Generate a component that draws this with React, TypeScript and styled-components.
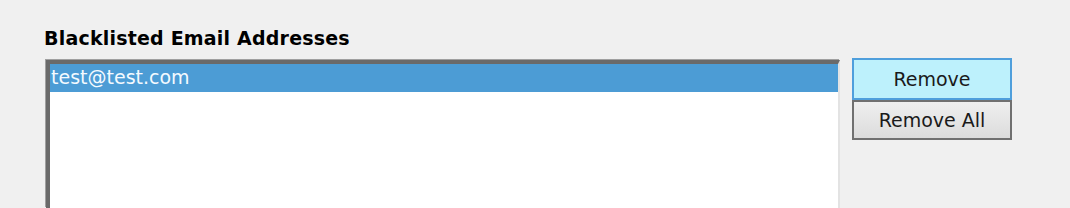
import React, { useState } from 'react';
import styled, { createGlobalStyle } from 'styled-components';

const GlobalStyle = createGlobalStyle`
  html, body {
    margin: 0;
    padding: 0;
    background: #f0f0f0;
    overflow: hidden;
  }
`;

const emails = ['test@test.com'];

export default function App() {
  const [selected, setSelected] = useState(0);

  return (
    <>
      <GlobalStyle />
      <Panel>
        <Title>Blacklisted Email Addresses</Title>
        <Body>
          <ListBox>
            {emails.map((email, i) => (
              <ListItem key={email} $selected={i === selected} onClick={() => setSelected(i)}>
                {email}
              </ListItem>
            ))}
          </ListBox>
          <Buttons>
            <Button $focused>Remove</Button>
            <Button>Remove All</Button>
          </Buttons>
        </Body>
      </Panel>
    </>
  );
}

const Panel = styled.div`
  width: 1070px;
  height: 208px;
  overflow: hidden;
  box-sizing: border-box;
  padding: 26px 0 0 44px;
  font-family: 'DejaVu Sans', Verdana, sans-serif;
  color: #000000;
`;

const Title = styled.div`
  font-size: 19px;
  font-weight: bold;
  line-height: 24px;
  margin-bottom: 8px;
  letter-spacing: 0.2px;
`;

const Body = styled.div`
  display: flex;
  align-items: flex-start;
`;

const ListBox = styled.div`
  width: 794px;
  height: 148px;
  margin: 2px 0 0 2px;
  box-sizing: border-box;
  background: #ffffff;
  border-style: solid;
  border-width: 4px 2px 0 4px;
  border-color: #6a6a6a #e3e3e3 #e3e3e3 #6a6a6a;
  box-shadow: -1px -1px 0 #a0a0a0;
`;

const ListItem = styled.div<{ $selected?: boolean }>`
  height: 28px;
  line-height: 27px;
  padding-left: 1px;
  font-size: 19px;
  background: ${(p) => (p.$selected ? '#4c9cd5' : 'transparent')};
  color: ${(p) => (p.$selected ? '#f4faff' : '#000000')};
  cursor: default;
`;

const Buttons = styled.div`
  display: flex;
  flex-direction: column;
  margin-left: 12px;
`;

const Button = styled.button<{ $focused?: boolean }>`
  width: 160px;
  height: ${(p) => (p.$focused ? '42px' : '40px')};
  box-sizing: border-box;
  padding: 0;
  border: 2px solid ${(p) => (p.$focused ? '#4f9fdc' : '#707070')};
  background: ${(p) =>
    p.$focused ? '#bdf1fc' : 'linear-gradient(#efefef, #dcdcdc)'};
  font-family: 'DejaVu Sans', Verdana, sans-serif;
  font-size: 19px;
  color: #1a1a1a;
  cursor: pointer;
`;
